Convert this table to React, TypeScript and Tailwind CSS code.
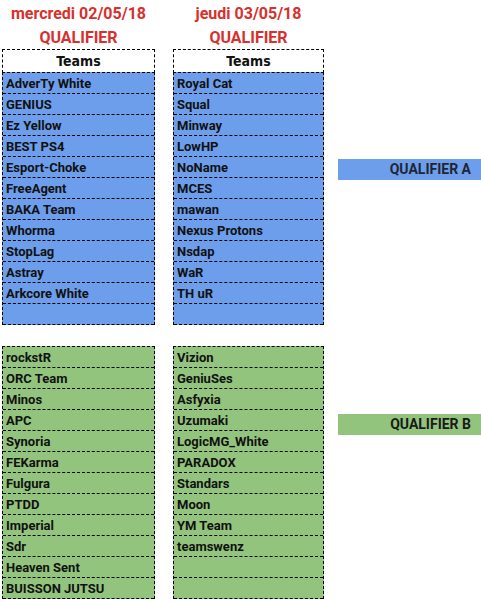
import React from "react";

const day1Blue = ["AdverTy White","GENIUS","Ez Yellow","BEST PS4","Esport-Choke","FreeAgent","BAKA Team","Whorma","StopLag","Astray","Arkcore White",""];
const day2Blue = ["Royal Cat","Squal","Minway","LowHP","NoName","MCES","mawan","Nexus Protons","Nsdap","WaR","TH uR",""];
const day1Green = ["rockstR","ORC Team","Minos","APC","Synoria","FEKarma","Fulgura","PTDD","Imperial","Sdr","Heaven Sent","BUISSON JUTSU"];
const day2Green = ["Vizion","GeniuSes","Asfyxia","Uzumaki","LogicMG_White","PARADOX","Standars","Moon","YM Team","teamswenz","",""];

function Rows({ items, bg }: { items: string[]; bg: string }) {
  return (
    <div className={`border-x border-t border-dashed border-black ${bg}`}>
      {items.map((t, i) => (
        <div
          key={i}
          className="h-[21px] border-b border-dashed border-black pl-[3px] pb-[3px] flex items-end text-[13px] font-bold text-[#111] leading-none"
        >
          {t}
        </div>
      ))}
    </div>
  );
}

function Column({ date, blue, green, w }: { date: string; blue: string[]; green: string[]; w: string }) {
  return (
    <div className={`${w} flex flex-col`}>
      <div className="h-[49px] flex flex-col items-center text-[#d7302d] font-bold text-[16px] leading-[24px] pt-[2px]">
        <div>{date}</div>
        <div>QUALIFIER</div>
      </div>
      <div className="border-x border-t border-dashed border-black bg-white h-[24px] border-b flex items-center justify-center text-[14px] font-bold text-[#111]" style={{ fontFamily: '"DejaVu Sans Condensed","Liberation Sans Narrow",Roboto,sans-serif', fontStretch: "condensed" }}>
        Teams
      </div>
      <div className="-mt-[1px]">
        <Rows items={blue} bg="bg-[#6d9eeb]" />
      </div>
      <div className="mt-[21px]">
        <Rows items={green} bg="bg-[#93c47d]" />
      </div>
    </div>
  );
}

export default function App() {
  return (
    <div className="w-[481px] h-[601px] bg-white overflow-hidden flex pl-[2px]" style={{ fontFamily: 'Roboto, "Liberation Sans", sans-serif' }}>
      <Column date="mercredi 02/05/18" blue={day1Blue} green={day1Green} w="w-[153px]" />
      <div className="w-[18px]" />
      <Column date="jeudi 03/05/18" blue={day2Blue} green={day2Green} w="w-[151px]" />
      <div className="flex-1 flex flex-col pl-[14px]">
        <div className="mt-[159px] h-[21px] bg-[#6d9eeb] flex items-center justify-end pr-[10px] text-[14px] font-bold text-[#1f2633]">
          QUALIFIER A
        </div>
        <div className="mt-[234px] h-[21px] bg-[#93c47d] flex items-center justify-end pr-[10px] text-[14px] font-bold text-[#1a1a1a]">
          QUALIFIER B
        </div>
      </div>
    </div>
  );
}
